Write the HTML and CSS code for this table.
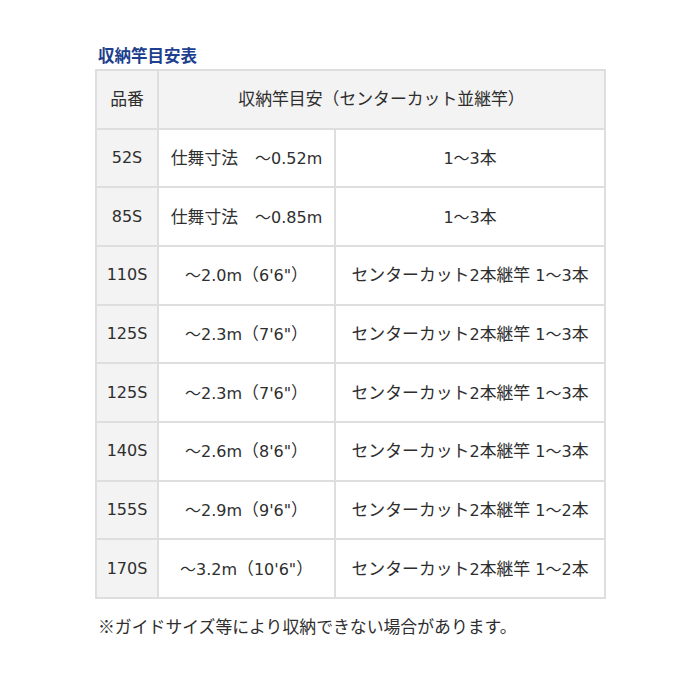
FILE: index.html
```html
<!DOCTYPE html>
<html lang="ja">
<head>
<meta charset="utf-8">
<link rel="stylesheet" href="styles.css">
</head>
<body>
<div class="wrap">
  <h2 class="title">収納竿目安表</h2>
  <table class="spec">
    <colgroup><col class="c1"><col class="c2"><col class="c3"></colgroup>
    <tr class="head"><th><span class="j">品番</span></th><th colspan="2"><span class="j">収納竿目安（センターカット並継竿）</span></th></tr>
    <tr><th>52S</th><td><span class="j">仕舞寸法　</span>～0.52m</td><td>1～3<span class="j">本</span></td></tr>
    <tr><th>85S</th><td><span class="j">仕舞寸法　</span>～0.85m</td><td>1～3<span class="j">本</span></td></tr>
    <tr><th>110S</th><td>～2.0m<span class="j">（</span>6'6"<span class="j">）</span></td><td><span class="j">センターカット</span>2<span class="j">本継竿</span> 1～3<span class="j">本</span></td></tr>
    <tr><th>125S</th><td>～2.3m<span class="j">（</span>7'6"<span class="j">）</span></td><td><span class="j">センターカット</span>2<span class="j">本継竿</span> 1～3<span class="j">本</span></td></tr>
    <tr><th>125S</th><td>～2.3m<span class="j">（</span>7'6"<span class="j">）</span></td><td><span class="j">センターカット</span>2<span class="j">本継竿</span> 1～3<span class="j">本</span></td></tr>
    <tr><th>140S</th><td>～2.6m<span class="j">（</span>8'6"<span class="j">）</span></td><td><span class="j">センターカット</span>2<span class="j">本継竿</span> 1～3<span class="j">本</span></td></tr>
    <tr><th>155S</th><td>～2.9m<span class="j">（</span>9'6"<span class="j">）</span></td><td><span class="j">センターカット</span>2<span class="j">本継竿</span> 1～2<span class="j">本</span></td></tr>
    <tr><th>170S</th><td>～3.2m<span class="j">（</span>10'6"<span class="j">）</span></td><td><span class="j">センターカット</span>2<span class="j">本継竿</span> 1～2<span class="j">本</span></td></tr>
  </table>
  <p class="note"><span class="j">※ガイドサイズ等により収納できない場合があります。</span></p>
</div>
</body>
</html>
```
FILE: styles.css
```css
html, body {
  margin: 0;
  padding: 0;
  background: #fff;
}
body {
  font-family: "DejaVu Sans", "Noto Sans CJK JP", sans-serif;
  color: #2e2e2e;
  font-size: 16px;
}
.j {
  font-family: "Noto Sans CJK JP", sans-serif;
  font-size: 16.85px;
}
.wrap {
  padding: 43px 0 0 95px;
}
.title {
  margin: 0 0 0 3px;
  font-size: 16.5px;
  font-weight: bold;
  color: #1d3f8e;
  line-height: 24px;
  height: 24px;
  font-family: "Noto Sans CJK JP", sans-serif;
}
.spec {
  margin-top: 2px;
  width: 509px;
  table-layout: fixed;
  border-collapse: collapse;
}
.c1 { width: 62px; }
.c2 { width: 177px; }
.c3 { width: 270px; }
.spec th, .spec td {
  border: 2px solid #dedede;
  height: 56.67px;
  padding: 0;
  text-align: center;
  vertical-align: middle;
  font-weight: normal;
  line-height: 20px;
  white-space: nowrap;
}
.spec th {
  background: #f3f3f3;
}
.note {
  margin: 17px 0 0 3px;
  line-height: 20px;
}
```
